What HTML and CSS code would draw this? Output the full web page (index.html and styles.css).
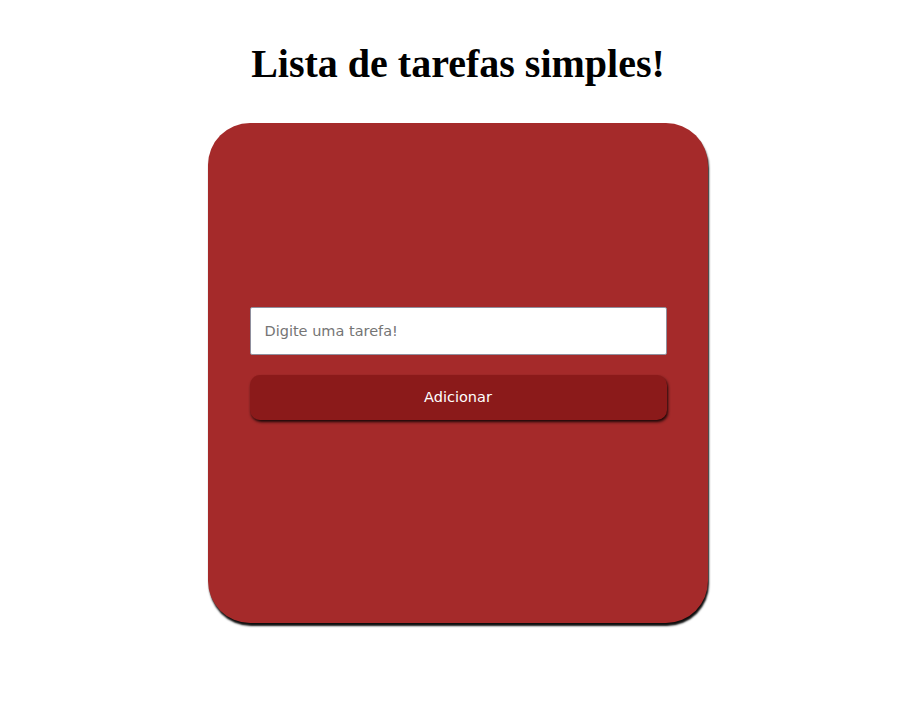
FILE: index.html
```html
<!DOCTYPE html>
<html lang="pt-BR">
<head>
<meta charset="utf-8">
<title>Lista de tarefas</title>
<link rel="stylesheet" href="styles.css">
</head>
<body>
<h1 class="title">Lista de tarefas simples!</h1>
<main class="card">
  <form class="task-form">
    <input class="task-input" type="text" placeholder="Digite uma tarefa!">
    <button class="task-button" type="button">Adicionar</button>
  </form>
</main>
</body>
</html>
```
FILE: styles.css
```css
body {
  margin: 0;
  padding: 8px 8px 8px 17px;
  background: #ffffff;
  display: flex;
  flex-direction: column;
  align-items: center;
}
.title {
  font-family: "Liberation Serif", "Times New Roman", serif;
  font-weight: bold;
  font-size: 40px;
  line-height: 46px;
  margin: 33px 0 0 0;
  color: #000;
}
.card {
  margin-top: 36px;
  width: 500px;
  height: 500px;
  box-sizing: border-box;
  background: #a52a2a;
  border-radius: 42px;
  box-shadow: 1px 3px 2px rgba(0, 0, 0, 0.95);
  display: flex;
  align-items: center;
  justify-content: center;
  padding-bottom: 20px;
}
.task-form {
  width: 417px;
  display: flex;
  flex-direction: column;
  gap: 20px;
}
.task-input {
  height: 48px;
  box-sizing: border-box;
  border: 1px solid #8f8f9d;
  border-radius: 2px;
  padding: 0 14px;
  font-family: "DejaVu Sans", Tahoma, sans-serif;
  font-size: 14.5px;
  color: #333;
  background: #fff;
  outline: none;
}
.task-input::placeholder {
  color: #757575;
}
.task-button {
  height: 45px;
  border: none;
  border-radius: 10px;
  background: #8b1a1a;
  color: #ffffff;
  font-family: "DejaVu Sans", Tahoma, sans-serif;
  font-size: 14.5px;
  box-shadow: 1px 2px 3px rgba(0, 0, 0, 0.85);
  cursor: pointer;
}
```
